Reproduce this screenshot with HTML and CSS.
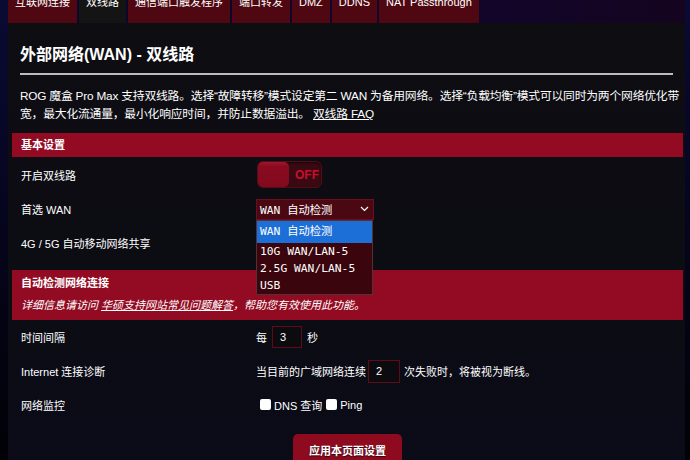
FILE: index.html
```html
<!DOCTYPE html>
<html lang="zh-CN">

<head>
  <meta charset="UTF-8">
  <meta name="viewport" content="width=device-width, initial-scale=1.0">
  <title>双线路 | ROG 魔盒 Pro Max</title>
  <link rel="stylesheet" href="styles.css">
</head>

<body>
  <div class="page">
    <ul class="tabs">
      <li class="tab">互联网连接</li>
      <li class="tab active">双线路</li>
      <li class="tab">通信端口触发程序</li>
      <li class="tab">端口转发</li>
      <li class="tab">DMZ</li>
      <li class="tab">DDNS</li>
      <li class="tab">NAT Passthrough</li>
    </ul>

    <div class="panel">
      <h2 class="title">外部网络(WAN) - 双线路</h2>
      <div class="divider"></div>
      <p class="intro">ROG 魔盒 Pro Max 支持双线路。选择“故障转移”模式设定第二 WAN 为备用网络。选择“负载均衡”模式可以同时为两个网络优化带宽，最大化流通量，最小化响应时间，并防止数据溢出。 <a href="#">双线路 FAQ</a></p>

      <div class="section">
        <div class="section-head">基本设置</div>
        <div class="row row-tall">
          <div class="label">开启双线路</div>
          <div class="value">
            <div class="switch">
              <span class="knob"></span>
              <span class="switch-text">OFF</span>
            </div>
          </div>
        </div>
        <div class="row">
          <div class="label">首选 WAN</div>
          <div class="value">
            <div class="select-wrap">
              <div class="select">
                <span>WAN 自动检测</span>
                <svg class="chevron" width="9" height="6" viewBox="0 0 9 6">
                  <polyline points="1,1 4.5,4.5 8,1" fill="none" stroke="#fff" stroke-width="1.2" />
                </svg>
              </div>
              <ul class="options">
                <li class="option selected">WAN 自动检测</li>
                <li class="option">10G WAN/LAN-5</li>
                <li class="option">2.5G WAN/LAN-5</li>
                <li class="option">USB</li>
              </ul>
            </div>
          </div>
        </div>
        <div class="row">
          <div class="label">4G / 5G 自动移动网络共享</div>
          <div class="value"></div>
        </div>
      </div>

      <div class="section section-gap">
        <div class="section-head section-head-info">
          <div class="info-title">自动检测网络连接</div>
          <div class="info-text">详细信息请访问 <a href="#">华硕支持网站常见问题解答</a>，帮助您有效使用此功能。</div>
        </div>
        <div class="row">
          <div class="label">时间间隔</div>
          <div class="value">
            每 <input class="num" type="text" value="3"> 秒
          </div>
        </div>
        <div class="row">
          <div class="label">Internet 连接诊断</div>
          <div class="value">
            当目前的广域网络连续 <input class="num num-wide" type="text" value="2"> 次失败时，将被视为断线。
          </div>
        </div>
        <div class="row">
          <div class="label">网络监控</div>
          <div class="value">
            <label class="check"><input type="checkbox"> DNS 查询</label>
            <label class="check"><input type="checkbox"> Ping</label>
          </div>
        </div>
      </div>

      <div class="actions">
        <button class="apply">应用本页面设置</button>
      </div>
    </div>
  </div>
</body>

</html>
```

FILE: styles.css
```css
body {
  margin: 0;
  height: 460px;
  overflow: hidden;
  font-family: "Liberation Sans", "Noto Sans CJK SC", sans-serif;
  color: #fff;
  background: linear-gradient(180deg, #0a0a34 0%, #06051f 45%, #010106 100%);
}

.page {
  margin: 0 5px 0 8px;
}

/* top tab strip, partly scrolled out of view */
.tabs {
  display: flex;
  gap: 2px;
  margin: 0;
  padding: 0;
  list-style: none;
  height: 23px;
  overflow: hidden;
  background: linear-gradient(90deg, #09082c 0%, #12052a 70%, #14041f 100%);
}

.tab {
  height: 23px;
  padding: 0 7px;
  background-color: #4f0811;
  font-size: 11px;
  line-height: 4px;
  white-space: nowrap;
}

.tab.active {
  background-color: #141414;
}

.panel {
  background: linear-gradient(180deg, #0d0d12 0%, #0c0c13 55%, #0b0b1a 100%);
  padding: 22px 2px 40px 4px;
}

.title {
  margin: 0 10px 0 8px;
  font-size: 16px;
  line-height: 20px;
  font-weight: bold;
}

.divider {
  height: 2px;
  margin: 8px 10px 0 8px;
  background-color: #bcbcbc;
}

.intro {
  margin: 12px 3px 10px 8px;
  font-size: 11.8px;
  line-height: 18px;
  letter-spacing: -0.2px;
}

a {
  color: #fff;
}

.section-gap {
  margin-top: 10px;
}

.section-head {
  background-color: #920b22;
  height: 24px;
  line-height: 24px;
  padding-left: 9px;
  font-size: 11px;
  font-weight: bold;
}

.section-head-info {
  height: auto;
  padding: 5px 9px 6px;
  line-height: 16px;
}

.info-text {
  margin-top: 5px;
  line-height: 18px;
  font-weight: normal;
  font-style: italic;
}

.row {
  display: flex;
  align-items: center;
  height: 34px;
  font-size: 11px;
}

.row-tall {
  height: 35px;
}

.label {
  width: 235px;
  padding-left: 9px;
  flex-shrink: 0;
}

.value {
  display: flex;
  align-items: center;
  white-space: nowrap;
}

/* on/off switch */
.switch {
  display: flex;
  align-items: center;
  width: 63px;
  height: 25px;
  margin-left: 1px;
  border: 1px solid #520d18;
  border-radius: 6px;
  background-color: #3a0911;
  box-shadow: inset 0 1px 2px rgba(0, 0, 0, 0.6);
}

.knob {
  width: 31px;
  height: 25px;
  border-radius: 5px;
  background: linear-gradient(180deg, #a3142c 0%, #8a0b1f 18%, #820a1c 100%);
}

.switch-text {
  margin-left: 6px;
  font-size: 12px;
  font-weight: bold;
  color: #c8102d;
}

/* select and its open list */
.select-wrap {
  position: relative;
}

.select {
  display: flex;
  align-items: center;
  justify-content: space-between;
  width: 109px;
  height: 19px;
  padding: 0 4px 0 3px;
  border: 1px solid #6c0e1d;
  background-color: #4a0812;
  font-family: "DejaVu Sans Mono", "Noto Sans CJK SC", monospace;
  font-size: 11.3px;
}

.options {
  position: absolute;
  top: 21px;
  left: 0;
  z-index: 2;
  width: 115px;
  margin: 0;
  padding: 0;
  list-style: none;
  border: 1px solid #563035;
  background-color: #3a050c;
  font-family: "DejaVu Sans Mono", "Noto Sans CJK SC", monospace;
  font-size: 11.3px;
}

.option {
  height: 17px;
  line-height: 17px;
  padding-left: 3px;
}

.option.selected {
  height: 22px;
  line-height: 22px;
  background-color: #1d6fd8;
}

.num {
  box-sizing: border-box;
  width: 30px;
  height: 22px;
  margin: 0 5px;
  padding: 0 0 0 7px;
  border: 1px solid #5e0b19;
  background-color: #0b0b10;
  color: #fff;
  font-family: "Liberation Sans", sans-serif;
  font-size: 11px;
}

.num-wide {
  width: 32px;
  height: 23px;
  margin: 0 4px 0 2px;
}

.check {
  display: flex;
  align-items: center;
  margin-left: 4px;
}

.check input {
  appearance: none;
  width: 11px;
  height: 11px;
  margin: 0 3px 2px 0;
  border-radius: 2px;
  background-color: #fff;
}

.actions {
  display: flex;
  justify-content: center;
  margin-top: 12px;
}

.apply {
  width: 109px;
  height: 32px;
  border: none;
  border-radius: 5px;
  background-color: #8e0a1f;
  color: #fff;
  font-family: "Liberation Sans", "Noto Sans CJK SC", sans-serif;
  font-size: 11px;
  font-weight: bold;
  text-shadow: 0 1px 1px rgba(0, 0, 0, 0.7);
  cursor: pointer;
}
```
